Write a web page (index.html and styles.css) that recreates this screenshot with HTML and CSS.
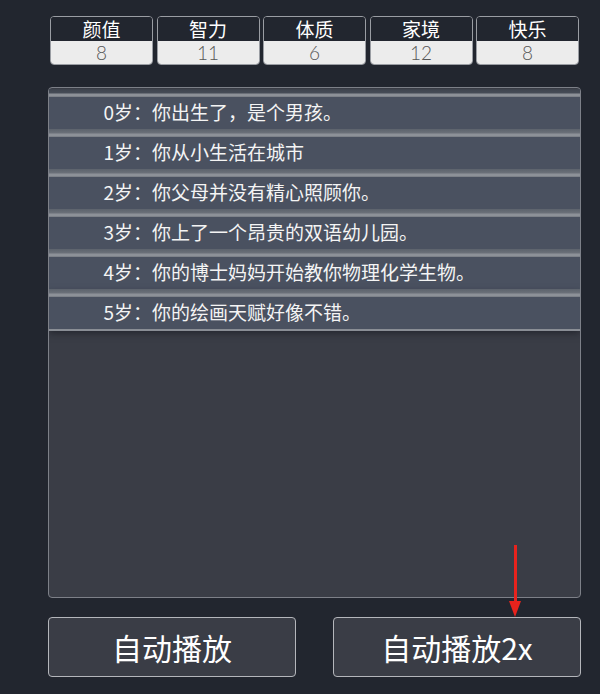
FILE: index.html
```html
<!DOCTYPE html>
<html>
<head>
  <meta charset="UTF-8">
  <meta name="viewport" content="width=device-width, initial-scale=1.0">
  <title>人生重开模拟器</title>
  <link rel="stylesheet" href="styles.css">
</head>
<body>
  <div class="game">
    <!-- 属性 -->
    <div class="stats">
      <div class="stat"><div class="stat-label">颜值</div><div class="stat-value">8</div></div>
      <div class="stat"><div class="stat-label">智力</div><div class="stat-value">11</div></div>
      <div class="stat"><div class="stat-label">体质</div><div class="stat-value">6</div></div>
      <div class="stat"><div class="stat-label">家境</div><div class="stat-value">12</div></div>
      <div class="stat"><div class="stat-label">快乐</div><div class="stat-value">8</div></div>
    </div>

    <!-- 人生记录 -->
    <ul class="lifetrajectory">
      <li class="log-item"><span class="age">0岁</span>：你出生了，是个男孩。</li>
      <li class="log-item"><span class="age">1岁</span>：你从小生活在城市</li>
      <li class="log-item"><span class="age">2岁</span>：你父母并没有精心照顾你。</li>
      <li class="log-item"><span class="age">3岁</span>：你上了一个昂贵的双语幼儿园。</li>
      <li class="log-item"><span class="age">4岁</span>：你的博士妈妈开始教你物理化学生物。</li>
      <li class="log-item"><span class="age">5岁</span>：你的绘画天赋好像不错。</li>
    </ul>

    <div class="btn-area">
      <button class="mainbtn">自动播放</button>
      <button class="mainbtn">自动播放2x</button>
      <div class="arrow"></div>
    </div>
  </div>
</body>
</html>
```

FILE: styles.css
```css
* {
  margin: 0;
  padding: 0;
  box-sizing: border-box;
}

body {
  background: #22262f;
  font-family: "Noto Sans CJK SC", "Noto Sans", sans-serif;
  color: #f2f2f2;
  width: 600px;
  height: 694px;
  overflow: hidden;
}

.game {
  padding-top: 16px;
}

.stats {
  display: flex;
  gap: 3.5px;
  margin-left: 50px;
  width: 529px;
}

.stat {
  flex: 1;
  border: 1px solid #9a9da3;
  border-radius: 4px;
  overflow: hidden;
  text-align: center;
}

.stat-label {
  height: 24px;
  line-height: 24px;
  font-size: 19px;
  background: #22262f;
  color: #ffffff;
}

.stat-value {
  height: 23px;
  line-height: 23px;
  font-family: "Lato", "Noto Sans", sans-serif;
  font-weight: 300;
  font-size: 19px;
  background: #ececec;
  color: #555555;
}

.lifetrajectory {
  list-style: none;
  margin: 22px 0 0 48px;
  width: 533px;
  height: 511px;
  background: #3a3d46;
  border: 1px solid #7d8088;
  border-radius: 4px;
  overflow: hidden;
  padding-top: 1px;
}

.log-item {
  height: 40px;
  padding-top: 7px;
  line-height: 32px;
  font-size: 19px;
  color: #f4f4f4;
  background:
    linear-gradient(#5c626c 0, #6b7079 4px, #8d9198 5px, #8d9198 7px, #6f747c 8px, transparent 8px),
    #4a5160;
}

.log-item:first-child {
  background:
    linear-gradient(#3f444e 0, #464c57 4px, #8d9198 5px, #8d9198 7px, #6f747c 8px, transparent 8px),
    #4a5160;
}

.log-item:last-child {
  box-shadow: 0 2px 0 #8a8e95, 0 4px 7px rgba(20, 22, 28, 0.6);
  position: relative;
}

.age {
  display: inline-block;
  width: 84px;
  text-align: right;
}

.btn-area {
  position: relative;
  display: flex;
  gap: 37px;
  margin: 19px 0 0 48px;
  width: 533px;
}

.mainbtn {
  width: 248px;
  height: 60px;
  background: #3a3d46;
  border: 1px solid #b4b6bb;
  border-radius: 4px;
  color: #ffffff;
  font-family: "Noto Sans CJK SC", "Noto Sans", sans-serif;
  font-size: 30px;
}

/* 红色提示箭头 */
.arrow {
  position: absolute;
  left: 466px;
  top: -72px;
  width: 3px;
  height: 58px;
  background: #e8231d;
}

.arrow::after {
  content: "";
  position: absolute;
  left: -5px;
  bottom: -14px;
  border-left: 6.5px solid transparent;
  border-right: 6.5px solid transparent;
  border-top: 16px solid #e8231d;
}
```
